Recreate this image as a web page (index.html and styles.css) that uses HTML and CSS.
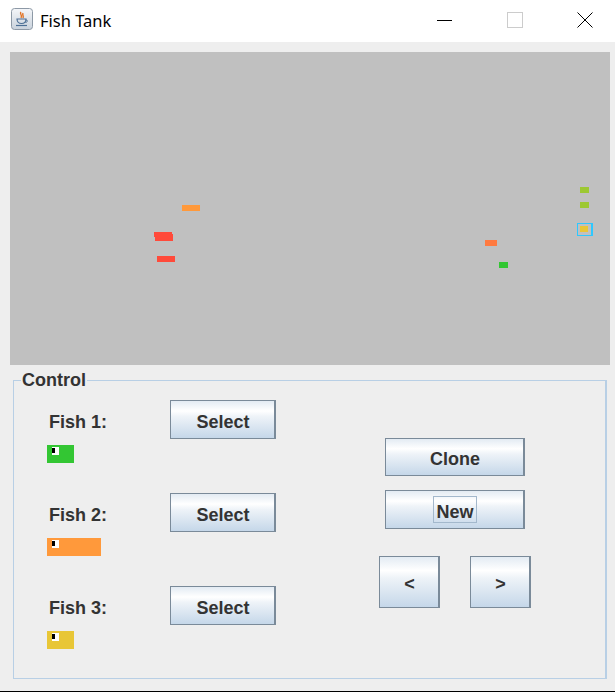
FILE: index.html
```html
<!DOCTYPE html>
<html>
<head>
<meta charset="utf-8">
<title>Fish Tank</title>
<link rel="stylesheet" href="styles.css">
</head>
<body>
<div class="window">
  <div class="titlebar">
    <svg class="app-icon" width="22" height="22" viewBox="0 0 22 22">
      <defs>
        <linearGradient id="ig" x1="0" y1="0" x2="0" y2="1">
          <stop offset="0" stop-color="#f4f6f9"/>
          <stop offset="1" stop-color="#c9d2dc"/>
        </linearGradient>
      </defs>
      <rect x="0.5" y="0.5" width="21" height="21" rx="3" fill="url(#ig)" stroke="#8d99a6"/>
      <path d="M10 4 C8 6 12 7 10 10 M12 5 C11 7 13 8 12 10" stroke="#e2701f" stroke-width="1.4" fill="none"/>
      <path d="M6 11 H15 C15 14 13 15.5 10.5 15.5 C8 15.5 6 14 6 11 Z" fill="none" stroke="#4c6f95" stroke-width="1.2"/>
      <path d="M15 12 C17 12 17 14 14.5 14.5" fill="none" stroke="#4c6f95" stroke-width="1"/>
      <path d="M5 17.5 H16" stroke="#4c6f95" stroke-width="1.2"/>
    </svg>
    <span class="title">Fish Tank</span>
    <div class="win-controls">
      <span class="win-btn">
        <svg width="16" height="16" viewBox="0 0 16 16"><path d="M0 8.5 H15" stroke="#000" stroke-width="1"/></svg>
      </span>
      <span class="win-btn">
        <svg width="16" height="16" viewBox="0 0 16 16"><rect x="0.5" y="0.5" width="15" height="15" fill="none" stroke="#cccccc"/></svg>
      </span>
      <span class="win-btn">
        <svg width="16" height="16" viewBox="0 0 16 16"><path d="M0.5 0.5 L15.5 15.5 M15.5 0.5 L0.5 15.5" stroke="#000" stroke-width="1"/></svg>
      </span>
    </div>
  </div>

  <div class="content">
    <div class="tank">
      <span class="fish orange" style="left:172px;top:153px;width:18px;height:6px"></span>
      <span class="fish red" style="left:144px;top:180px;width:18px;height:5px"></span>
      <span class="fish red" style="left:145px;top:182px;width:18px;height:7px"></span>
      <span class="fish red" style="left:147px;top:204px;width:18px;height:6px"></span>
      <span class="fish lime" style="left:570px;top:135px;width:9px;height:6px"></span>
      <span class="fish lime" style="left:570px;top:150px;width:9px;height:6px"></span>
      <span class="selected" style="left:567px;top:171px;width:16px;height:13px"></span>
      <span class="fish yellow" style="left:570px;top:174px;width:8px;height:6px"></span>
      <span class="fish coral" style="left:475px;top:188px;width:12px;height:6px"></span>
      <span class="fish green" style="left:489px;top:210px;width:9px;height:6px"></span>
    </div>

    <div class="panel">
      <span class="legend">Control</span>
      <div class="left-col">
        <div class="fish-group">
          <div class="fish-row">
            <span class="fish-label">Fish 1:</span>
            <button class="btn btn-select">Select</button>
          </div>
          <div class="swatch green swatch-short"><span class="eye"></span></div>
        </div>
        <div class="fish-group">
          <div class="fish-row">
            <span class="fish-label">Fish 2:</span>
            <button class="btn btn-select">Select</button>
          </div>
          <div class="swatch orange swatch-long"><span class="eye"></span></div>
        </div>
        <div class="fish-group">
          <div class="fish-row">
            <span class="fish-label">Fish 3:</span>
            <button class="btn btn-select">Select</button>
          </div>
          <div class="swatch yellow swatch-short"><span class="eye"></span></div>
        </div>
      </div>
      <div class="right-col">
        <button class="btn btn-wide btn-clone">Clone</button>
        <button class="btn btn-wide btn-new"><span class="focus">New</span></button>
        <div class="arrows">
          <button class="btn btn-arrow">&lt;</button>
          <button class="btn btn-arrow">&gt;</button>
        </div>
      </div>
    </div>
  </div>
</div>
</body>
</html>
```

FILE: styles.css
```css
* { box-sizing: border-box; }

html, body {
  margin: 0;
  padding: 0;
  background: #eeeeee;
}

.window {
  width: 615px;
  height: 692px;
  background: #eeeeee;
  border-bottom: 1px solid #000000;
  display: flex;
  flex-direction: column;
  font-family: "Liberation Sans", Arial, sans-serif;
  color: #333333;
}

/* Title bar */
.titlebar {
  height: 42px;
  background: #ffffff;
  display: flex;
  align-items: center;
  padding: 0 10px 2px 11px;
}

.app-icon {
  display: block;
  flex: none;
  margin-bottom: 2px;
}

.title {
  margin-left: 7px;
  font-family: "Noto Sans", "Open Sans", sans-serif;
  font-size: 16.5px;
  color: #000000;
  flex: 1;
}

.win-controls {
  display: flex;
  gap: 30px;
}

.win-btn {
  width: 40px;
  height: 16px;
  display: flex;
  justify-content: center;
  align-items: center;
}

.win-btn svg { display: block; }

/* Content */
.content {
  padding: 10px 5px 0 10px;
}

.tank {
  position: relative;
  width: 600px;
  height: 313px;
  background: #c0c0c0;
}

.fish {
  position: absolute;
  display: block;
}

.selected {
  position: absolute;
  display: block;
  border: 1px solid #2ec8ff;
  border-right-width: 2px;
}

.red { background: #ff4a3a; }
.orange { background: #ff993b; }
.lime { background: #9dc833; }
.yellow { background: #e8c636; }
.coral { background: #ff7a40; }
.green { background: #33c633; }

/* Control panel */
.panel {
  position: relative;
  margin: 15px 0 0 3px;
  width: 594px;
  height: 299px;
  border: 1px solid #b8cfe5;
  border-right-width: 2px;
  display: flex;
  align-items: flex-start;
  padding: 19px 0 0 33px;
}

.legend {
  position: absolute;
  top: -11px;
  left: 7px;
  padding: 0 1px;
  background: #eeeeee;
  font-weight: bold;
  font-size: 18px;
  line-height: 21px;
  color: #333333;
}

.left-col {
  display: flex;
  flex-direction: column;
  gap: 30px;
}

.fish-row {
  display: flex;
  align-items: center;
  height: 39px;
}

.fish-label {
  width: 123px;
  padding-left: 2px;
  font-weight: bold;
  font-size: 18px;
  padding-top: 5px;
}

.swatch {
  margin-top: 6px;
  height: 18px;
  padding: 2px 0 0 5px;
}

.swatch-short { width: 27px; }
.swatch-long { width: 54px; }

.eye {
  display: block;
  position: relative;
  width: 7px;
  height: 8px;
  background: #ffffff;
}

.eye::before {
  content: "";
  position: absolute;
  left: 0;
  top: 1px;
  width: 3px;
  height: 5px;
  background: #000000;
}

/* Buttons */
.btn {
  margin: 0;
  padding: 5px 0 0 1px;
  font-family: "Liberation Sans", Arial, sans-serif;
  font-weight: bold;
  font-size: 18px;
  color: #333333;
  border: 1px solid #7a8a99;
  border-right: 2px solid #7a8a99;
  background: linear-gradient(to bottom, #e3ebf3 0%, #ffffff 27%, #eef3f8 42%, #c5d7e9 100%);
  display: flex;
  align-items: center;
  justify-content: center;
}

.btn-select {
  width: 106px;
  height: 39px;
}

.right-col {
  margin-left: 103px;
  margin-top: 38px;
  width: 152px;
  display: flex;
  flex-direction: column;
  align-items: center;
}

.btn-wide {
  width: 140px;
  height: 39px;
}

.btn-clone { height: 38px; }

.btn-new {
  margin-top: 14px;
  padding-top: 0;
}

.focus {
  display: block;
  height: 27px;
  line-height: 25px;
  padding: 3px 2px 0 2px;
  border: 1px solid #a3b8cc;
}

.arrows {
  margin-top: 27px;
  display: flex;
  gap: 30px;
}

.btn-arrow {
  width: 61px;
  height: 52px;
}
```
